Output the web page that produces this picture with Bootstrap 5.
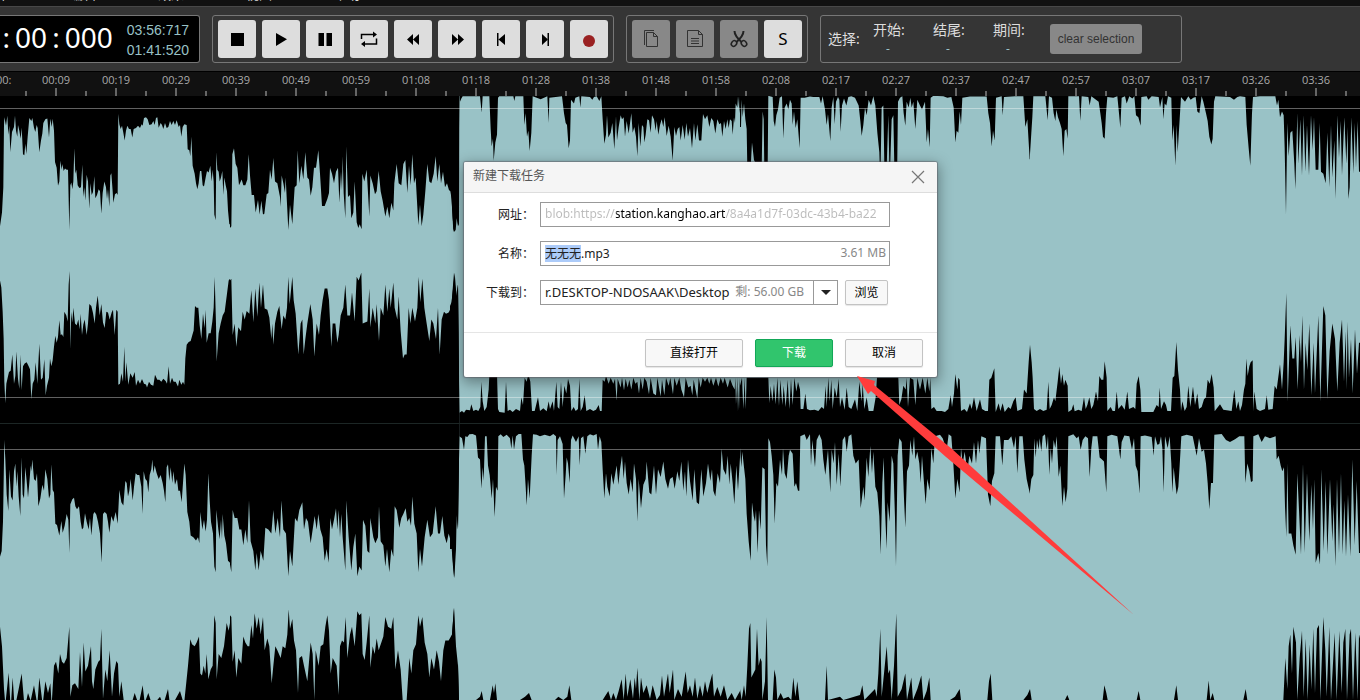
<!DOCTYPE html>
<html lang="zh-CN">
<head>
<meta charset="utf-8">
<meta name="viewport" content="width=device-width, initial-scale=1">
<title>音频编辑器</title>
<link href="https://cdn.jsdelivr.net/npm/bootstrap@5.3.0/dist/css/bootstrap.min.css" rel="stylesheet">
<style>
  body { background: #000; font-family: "Noto Sans", "Noto Sans CJK SC", sans-serif; font-size: 14px; line-height: 20px; color: #ddd; }
  .menu-strip { height: 6px; background: #111; font-size: 13px; }
  .menu-strip a { flex: 0 0 88px; margin-top: -15px; color: #ddd; line-height: 18px; }
  .menu-strip a:first-child { margin-left: -18px; }
  .toolbar { height: 65px; background: #353535; border-top: 1px solid #484848; padding-top: 8px; gap: 12px; }
  .panel-box { height: 48px; border: 1px solid #777; border-radius: 3px; padding: 0 5px; gap: 6px; }
  .clock-box { width: 200px; background: #000; border-left: 0; border-radius: 0 3px 3px 0; padding: 0 10px; gap: 14px; }
  .clock-now { font-size: 28px; line-height: 42px; color: #fff; gap: 5px; padding-bottom: 4px; }
  .clock-side { font: 14px/20px "Liberation Sans", Arial, sans-serif; color: #99c2c6; padding-top: 2px; }
  .tool { width: 38px; height: 38px; background: #ddd; border: 0; border-radius: 3px; color: #000; font-size: 17px; }
  .tool:disabled { background: #888; color: #333; }
  .tool svg, .btn-x svg { display: block; }
  .select-box { width: 362px; padding: 0 7px; gap: 0; }
  .sel-title { width: 45px; }
  .sel-cell { width: 60px; line-height: 19px; }
  .sel-cell output { width: 30px; color: #99c2c6; font-size: 12px; }
  .clear-btn { width: 92px; height: 30px; background: #888; border: 0; border-radius: 3px; color: #333; font: 12px/30px "Liberation Sans", Arial, sans-serif; margin-left: -3px; }
  .ruler { height: 25px; border-top: 1px solid #000; background:
      linear-gradient(90deg, #666 2px, transparent 2px) 55px 100% / 60px 8px repeat-x,
      linear-gradient(90deg, #666 2px, transparent 2px) 25px 100% / 60px 5px repeat-x, #111; }
  .ruler-labels { margin-left: -34px; font: 11px/16px "Open Sans", sans-serif; color: #aaa; }
  .ruler-labels span { flex: 0 0 60px; text-align: center; }
  .wave { height: 604px; background: #99c2c6; }
  .pointer { left: 850px; top: 370px; z-index: 20; pointer-events: none; }
  .dl { left: 464px; top: 162px; width: 473px; z-index: 10; background: #fff; color: #222; font-size: 12px; border-radius: 2px; box-shadow: 0 0 1px 1px rgba(90,80,90,.5), 0 4px 14px 2px rgba(0,0,0,.35); }
  .dl-head { height: 31px; background: #f5f5f5; border-bottom: 1px solid #ddd; padding: 0 12px 2px 9px; color: #555; border-radius: 2px 2px 0 0; }
  .btn-x { background: none; border: 0; color: #777; padding: 2px 0 0; }
  .dl-body { padding: 9px 47px 13px 0; }
  .dl-row { gap: 6px; margin-bottom: 14px; }
  .dl-row label { width: 70px; text-align: right; }
  .dest { gap: 7px; padding-right: 2px; }
  .field { height: 25px; border: 1px solid #999; background: #fff; }
  .field input { border: 0; outline: 0; background: none; padding: 0 0 2px 4px; color: #222; min-width: 0; height: 23px; }
  .field .url { margin-right: 4px; padding-right: 0; color: transparent; background: linear-gradient(90deg, #bbb 75px, #000 75px 184px, #bbb 184px); -webkit-background-clip: text; background-clip: text; }
  .field .fname { background: linear-gradient(#accbf9, #accbf9) 4px 3px / 36px 17px no-repeat; }
  .field .folder { font-size: 13px; }
  .field .note { color: #888; padding: 0 3px 2px 0; white-space: nowrap; }
  .field .free { padding: 0 9px 2px 4px; }
  .field .drop { width: 24px; height: 23px; border: 0; border-left: 1px solid #999; background: #fff; flex-shrink: 0; }
  .drop-mark { width: 0; border: 5px solid transparent; border-top-color: #222; border-bottom: 0; display: block; margin: auto; }
  .dl-btn { width: 78px; height: 28px; border: 1px solid #c3c3c3; border-radius: 2px; background: #f8f8f8; color: #000; padding: 0; box-shadow: 0 1px 1px rgba(0,0,0,.1); }
  .dl-btn.wide { width: 98px; }
  .dl-btn.browse { width: 43px; height: 25px; flex-shrink: 0; }
  .dl-btn.go { background: #31c56d; border-color: #12a757; color: #fff; }
  .dl-foot { height: 45px; border-top: 1px solid #e5e5e5; padding: 6px 14px; gap: 12px; }
</style>
</head>
<body class="vh-100 overflow-hidden position-relative">

<nav class="menu-strip d-flex overflow-hidden" aria-label="菜单">
  <a class="text-decoration-none" href="#">文件</a><a class="text-decoration-none" href="#">编辑</a><a class="text-decoration-none" href="#">效果</a><a class="text-decoration-none" href="#">视图</a><a class="text-decoration-none" href="#">帮助</a>
</nav>

<header class="toolbar d-flex align-items-start">
  <div class="panel-box clock-box d-flex align-items-center justify-content-end flex-shrink-0">
    <div class="clock-now d-flex"><span>0</span><span>:</span><span>00</span><span>:</span><span>000</span></div>
    <div class="clock-side"><div>03:56:717</div><div>01:41:520</div></div>
  </div>

  <div class="panel-box d-flex align-items-center flex-shrink-0">
    <button class="tool p-0 d-grid align-items-center justify-content-center" aria-label="停止"><svg width="20" height="20"><path d="M4 4h13v13H4z"/></svg></button>
    <button class="tool p-0 d-grid align-items-center justify-content-center" aria-label="播放"><svg width="20" height="20"><path d="M5 4 16 10.300 5 17z"/></svg></button>
    <button class="tool p-0 d-grid align-items-center justify-content-center" aria-label="暂停"><svg width="20" height="20"><path d="M3.500 4H9v13H3.500zM11.500 4H17v13h-5.500z"/></svg></button>
    <button class="tool p-0 d-grid align-items-center justify-content-center" aria-label="循环"><svg width="20" height="20"><path d="M2.500 10V5.500H15M17.500 9.500V15H5" fill="none" stroke="#000" stroke-width="1.500"/><path d="M14 2.500 18 5.500 14 8.500zM6 12 2 15 6 18z"/></svg></button>
    <button class="tool p-0 d-grid align-items-center justify-content-center" aria-label="快退"><svg width="20" height="20"><path d="M10 5v11L4 10.500zM16 5v11l-6-5.500z"/></svg></button>
    <button class="tool p-0 d-grid align-items-center justify-content-center" aria-label="快进"><svg width="20" height="20"><path d="M5 5v11l6-5.500zM11 5v11l6-5.500z"/></svg></button>
    <button class="tool p-0 d-grid align-items-center justify-content-center" aria-label="跳到开头"><svg width="20" height="20"><path d="M6 4h1.500v13H6zM14 5v11l-6.500-5.500z"/></svg></button>
    <button class="tool p-0 d-grid align-items-center justify-content-center" aria-label="跳到结尾"><svg width="20" height="20"><path d="M12.500 4H14v13h-1.500zM7 5v11l6-5.500z"/></svg></button>
    <button class="tool p-0 d-grid align-items-center justify-content-center" aria-label="录音"><svg width="20" height="20"><circle cx="10" cy="12" r="6" fill="#9a2122"/></svg></button>
  </div>

  <div class="panel-box d-flex align-items-center flex-shrink-0">
    <button class="tool p-0 d-grid align-items-center justify-content-center" disabled aria-label="复制"><svg width="20" height="20" fill="none" stroke="#333"><path d="M5.500 3.500h7l4 4v10h-11zM12.500 3.500v4h4M3.500 16V1.500H13"/></svg></button>
    <button class="tool p-0 d-grid align-items-center justify-content-center" disabled aria-label="粘贴"><svg width="20" height="20" fill="none" stroke="#333"><path d="M2.500 1.500h11l4 4v12h-15zM13.500 1.500v4h4M6 9.500h8M6 12h8M6 14.500h8"/></svg></button>
    <button class="tool p-0 d-grid align-items-center justify-content-center" disabled aria-label="剪切"><svg width="20" height="20" fill="none" stroke="#222" stroke-width="1.500"><path d="M5.500 2c0 3 2 6.500 7 11M14.500 2c0 3-2 6.500-7 11" stroke-width="2"/><ellipse cx="5" cy="14.500" rx="2.500" ry="3" transform="rotate(40 5 14.500)"/><ellipse cx="15" cy="14.500" rx="2.500" ry="3" transform="rotate(-40 15 14.500)"/></svg></button>
    <button class="tool p-0" aria-label="静音">S</button>
  </div>

  <div class="panel-box select-box d-flex align-items-center flex-shrink-0">
    <div class="sel-title">选择:</div>
    <div class="sel-cell">开始:<output class="d-block text-center">-</output></div>
    <div class="sel-cell">结尾:<output class="d-block text-center">-</output></div>
    <div class="sel-cell">期间:<output class="d-block text-center">-</output></div>
    <button class="clear-btn p-0" disabled>clear selection</button>
  </div>
</header>

<div class="ruler overflow-hidden">
  <div class="ruler-labels d-flex">
    <span>00:00:</span><span>00:09</span><span>00:19</span><span>00:29</span><span>00:39</span><span>00:49</span><span>00:59</span><span>01:08</span><span>01:18</span><span>01:28</span><span>01:38</span><span>01:48</span><span>01:58</span><span>02:08</span><span>02:17</span><span>02:27</span><span>02:37</span><span>02:47</span><span>02:57</span><span>03:07</span><span>03:17</span><span>03:26</span><span>03:36</span>
  </div>
</div>

<main class="wave">
<svg class="d-block w-100 h-100" viewBox="0 0 1360 604" preserveAspectRatio="none" role="img" aria-label="双声道波形">
  <!-- silence above and below each channel, section by section; per section: left top, left bottom, right top, right bottom -->
  <g transform="translate(0 -6) scale(.33333 .389)">
    <path d="M0 0 0 350 6 315 10 250 12 90 13 70 18 92 22 66 25 115 28 92 31 160 36 108 42 95 45 66 48 105 52 120 54 90 58 105 62 125 65 97 69 165 73 168 76 138 79 165 83 120 88 72 94 80 97 72 102 97 106 108 110 90 113 98 118 160 123 130 127 112 130 85 136 75 142 73 147 122 151 74 155 95 158 74 162 105 165 185 170 200 174 246 178 235 181 182 185 205 187 190 191 208 195 202 200 205 204 205 208 360 211 245 214 238 217 255 220 235 223 150 226 215 229 205 233 245 238 252 243 250 247 192 250 275 253 250 256 285 260 218 264 235 268 305 271 240 275 270 279 262 283 222 286 278 291 270 296 255 300 260 304 318 308 265 313 235 318 250 321 280 324 255 328 300 331 220 334 214 338 260 340 290 345 268 350 265 353 270 355 62 358 88 362 100 366 92 370 110 374 130 378 105 382 92 387 100 392 100 397 122 401 100 408 98 414 92 420 98 425 88 428 92 432 72 438 70 443 75 448 90 455 88 460 80 464 90 468 72 472 70 476 97 482 85 486 90 490 100 495 85 500 98 505 95 510 80 515 90 520 80 525 90 530 78 536 95 540 90 544 120 548 95 553 88 560 90 563 152 568 155 571 170 574 120 578 195 584 215 588 240 592 255 596 240 600 208 604 208 608 245 612 248 617 225 621 208 626 212 631 195 635 235 638 205 641 235 643 320 647 335 649 160 652 205 656 210 659 235 663 225 667 208 670 270 673 225 677 245 681 260 684 310 688 345 690 345 690 0Z"/>
    <path d="M0 857 0 490 4 508 8 570 11 640 13 750 16 805 19 755 23 740 27 725 32 722 37 680 42 755 46 735 49 672 54 742 58 768 61 680 65 772 69 710 74 703 80 700 86 710 90 718 94 795 98 755 103 745 107 700 112 755 118 652 123 745 128 740 133 692 137 785 141 760 147 740 150 690 154 710 158 695 162 660 166 632 170 650 174 635 178 592 182 630 186 628 190 635 193 570 199 580 203 595 206 500 209 465 211 665 214 570 217 598 220 560 225 600 230 605 235 590 239 615 242 575 246 630 250 603 254 590 260 630 264 600 268 550 274 555 279 573 284 600 288 560 293 528 299 580 304 550 309 598 314 612 319 570 324 572 329 590 335 572 339 565 344 630 349 565 353 570 355 758 360 755 364 728 369 750 373 660 376 750 379 700 385 758 391 728 398 740 404 725 408 760 414 745 420 755 426 743 432 755 438 757 441 765 447 750 453 758 460 760 465 732 472 745 478 745 484 750 490 742 497 748 501 755 506 710 510 755 516 740 521 750 527 750 534 762 538 745 544 758 549 750 553 758 556 690 560 655 566 648 572 645 577 630 581 618 585 555 590 560 595 560 599 605 604 640 609 575 614 612 617 565 620 650 626 625 632 625 637 595 641 560 644 480 648 600 650 697 656 625 662 600 668 580 674 570 680 530 686 490 690 485 690 857Z"/>
    <path d="M0 857 0 1200 5 1185 9 1110 13 900 16 950 20 1040 25 1082 28 975 33 1045 38 1055 42 980 46 960 49 1020 52 980 56 1045 61 1095 64 945 68 1040 72 1050 76 970 81 1015 84 1048 89 1000 92 965 94 980 97 950 102 1000 107 1005 111 985 115 1070 121 1050 127 1015 132 1030 136 975 142 1000 147 1050 151 1040 154 962 158 1028 162 1035 166 1115 171 1118 178 1145 184 1108 188 1138 194 1120 200 1090 205 1105 208 1190 211 1065 217 1052 222 1048 226 1070 231 1078 237 1070 242 1110 246 1130 250 1125 255 1088 260 1110 266 1130 270 1100 274 1145 280 1090 284 1085 289 1092 294 1110 300 1140 305 1215 309 1090 314 1085 320 1090 324 1110 328 1138 334 1095 340 1110 347 1085 353 1115 358 1028 364 1060 370 1068 376 1005 380 1010 384 1045 388 1030 392 1000 398 1055 402 1020 407 985 412 990 418 990 424 1020 428 1090 431 980 436 1000 441 1005 445 1035 449 990 454 975 457 950 460 985 464 965 470 985 476 1000 482 990 488 1010 492 1030 496 1060 500 970 504 962 508 1005 512 970 517 1010 520 980 525 1015 531 1000 535 1030 540 1030 545 1060 549 1010 553 960 557 990 562 1085 568 1110 572 1145 580 1150 588 1158 594 1150 598 1165 601 1085 607 1130 612 1105 617 1135 621 1105 625 985 629 1055 633 1110 639 1140 643 1225 647 1240 649 1080 655 1130 659 1155 663 1105 666 1155 668 1090 673 1145 678 1165 684 1210 690 1215 690 857Z"/>
    <path d="M0 1600 0 1380 6 1430 12 1540 16 1580 26 1498 32 1590 38 1510 44 1590 56 1540 65 1500 74 1590 84 1550 92 1570 102 1530 112 1580 118 1510 128 1580 136 1520 144 1550 151 1525 155 1580 162 1480 168 1470 175 1500 180 1450 186 1470 192 1475 200 1460 208 1380 211 1560 217 1530 225 1525 235 1540 240 1445 246 1535 251 1420 256 1495 264 1480 273 1430 276 1520 280 1540 286 1490 295 1470 300 1465 304 1385 309 1565 316 1490 322 1520 329 1440 336 1560 342 1500 349 1468 354 1475 358 1560 364 1520 372 1575 382 1570 394 1580 404 1550 416 1580 428 1530 434 1575 445 1550 456 1580 470 1570 480 1560 490 1580 504 1540 510 1580 524 1570 540 1545 552 1580 558 1530 564 1480 571 1412 576 1425 584 1430 590 1420 597 1405 601 1500 606 1505 611 1480 616 1500 620 1450 625 1515 632 1490 638 1480 643 1350 647 1370 650 1515 656 1450 664 1460 672 1430 680 1370 686 1390 690 1370 690 1600Z"/>
  </g>
  <g transform="translate(230 -6) scale(.33333 .389)">
    <path d="M0 0 0 355 4 350 7 165 12 150 17 190 22 200 27 245 35 230 40 245 46 245 52 230 56 165 60 220 65 270 72 270 77 315 84 283 89 320 94 285 99 320 103 318 110 268 115 265 120 205 125 230 130 175 135 235 142 240 150 275 152 300 155 220 160 240 165 265 167 225 175 360 180 295 187 345 194 250 200 245 203 155 208 240 214 195 220 230 226 160 232 225 237 230 242 272 247 250 252 200 258 200 265 155 270 215 276 298 284 298 292 280 297 265 300 200 306 215 312 240 318 210 324 200 328 290 333 210 336 258 338 170 341 265 346 330 349 145 354 275 360 270 364 330 370 315 374 235 380 340 385 355 389 345 395 358 397 215 403 235 410 205 418 325 421 220 428 240 435 268 440 260 446 208 452 260 458 285 466 325 472 300 478 330 484 290 490 310 493 240 500 190 506 240 514 245 520 190 526 180 532 265 537 195 542 245 547 165 552 240 557 225 565 348 570 295 575 350 580 320 586 260 592 190 598 235 604 240 611 215 617 170 622 235 628 190 633 240 639 210 645 250 651 240 657 258 663 260 668 330 672 365 677 360 680 330 684 350 687 345 688 0Z"/>
    <path d="M0 857 0 490 4 485 8 630 14 600 19 660 25 610 33 620 38 570 44 590 50 568 58 575 64 515 70 597 76 510 82 583 88 495 93 560 99 500 104 562 112 565 118 585 124 640 127 600 130 655 135 600 142 570 148 555 155 615 160 580 166 590 171 560 175 480 179 550 187 480 191 540 197 575 205 680 212 600 217 590 221 680 226 640 232 600 241 550 248 590 253 685 260 600 267 630 272 580 278 540 284 510 292 510 297 540 304 660 308 600 316 600 322 650 326 630 332 580 340 560 346 500 352 580 360 580 366 520 374 595 380 480 386 490 394 470 398 600 405 598 412 595 418 510 421 610 428 560 436 600 440 550 447 645 452 560 460 580 466 500 472 570 478 510 482 560 490 495 494 560 502 590 506 530 512 620 519 690 524 680 530 680 536 560 541 600 547 560 555 595 562 560 566 480 571 545 577 485 583 560 590 600 598 645 604 590 610 600 618 640 624 560 629 680 635 590 642 570 648 575 656 572 663 560 668 520 674 470 680 535 684 500 686 620 688 830 688 857Z"/>
    <path d="M0 857 0 1220 4 1240 8 1080 14 1100 22 1100 28 1130 34 1130 40 1170 46 1130 52 1165 57 1055 62 1160 70 1185 76 1235 80 1190 86 1235 92 1185 100 1210 106 1125 115 1130 124 1140 130 1080 136 1140 143 1100 150 1150 154 1055 160 1130 168 1140 175 1250 180 1185 187 1225 195 1100 202 1110 208 1080 217 1060 222 1130 228 1100 234 1110 242 1165 248 1130 254 1095 260 1130 265 1090 271 1130 278 1150 284 1210 290 1180 296 1215 301 1100 306 1130 312 1105 318 1075 322 1130 326 1080 330 1150 334 1090 338 1150 346 1235 349 1055 356 1150 364 1235 370 1175 376 1140 382 1250 388 1225 395 1235 399 1105 406 1120 412 1185 418 1190 421 1100 430 1150 436 1165 444 1150 447 1070 452 1160 460 1170 466 1225 471 1180 478 1240 484 1180 490 1200 494 1070 500 1080 508 1125 514 1100 520 1090 527 1075 532 1110 538 1100 543 1120 547 1045 553 1115 560 1140 565 1240 570 1180 576 1225 584 1150 592 1105 600 1150 608 1140 617 1070 624 1140 630 1140 637 1095 643 1145 650 1165 656 1140 664 1165 669 1225 673 1255 678 1180 680 1090 684 1130 688 890 688 857Z"/>
    <path d="M0 1600 0 1350 4 1355 8 1470 14 1440 19 1510 25 1460 34 1475 40 1405 46 1420 53 1430 58 1430 64 1375 69 1410 74 1345 80 1385 86 1355 92 1400 99 1355 104 1440 112 1410 118 1430 125 1525 130 1480 136 1430 142 1440 152 1460 158 1430 166 1435 172 1400 176 1335 180 1385 187 1360 192 1415 198 1440 204 1550 208 1460 216 1455 222 1480 232 1520 242 1420 248 1450 253 1568 257 1440 266 1480 272 1430 280 1425 286 1380 292 1350 297 1390 302 1500 308 1460 314 1470 320 1480 326 1555 330 1430 336 1415 342 1420 347 1355 352 1460 360 1400 366 1380 374 1430 382 1340 388 1350 394 1345 398 1450 404 1465 410 1420 418 1350 421 1485 428 1430 434 1450 440 1410 446 1440 454 1420 460 1405 466 1355 474 1380 484 1385 490 1355 496 1490 504 1440 512 1490 518 1568 530 1568 538 1460 544 1500 550 1440 558 1425 565 1350 570 1380 577 1355 584 1420 592 1450 598 1510 604 1460 612 1490 620 1440 627 1470 633 1520 640 1440 646 1415 656 1415 666 1400 672 1330 678 1430 684 1480 688 1600Z"/>
  </g>
  <g transform="translate(450 -6) scale(.33333 .389)">
    <path d="M28 0 30 30 34 22 38 16 90 16 95 58 98 16 118 16 122 100 125 145 129 125 131 182 136 135 141 115 144 20 148 16 190 16 193 28 196 16 220 16 223 90 227 60 231 120 235 105 239 157 244 110 248 16 272 24 292 16 296 85 298 20 336 16 342 60 347 85 351 90 356 150 360 130 363 25 372 35 376 20 388 16 391 45 394 16 420 18 427 25 432 18 440 16 448 28 454 16 458 75 463 138 468 115 471 65 475 122 482 110 487 85 493 152 498 68 501 130 506 95 512 65 516 75 521 70 525 120 530 80 536 112 544 60 548 110 553 95 558 120 562 170 566 85 571 145 576 90 580 95 583 135 587 115 592 75 597 78 602 110 606 65 612 75 617 105 620 80 625 115 630 90 635 75 640 95 644 70 650 118 656 92 662 120 668 182 673 95 678 118 683 100 688 95 692 130 698 90 704 128 709 85 714 120 720 98 726 150 732 85 736 130 742 88 747 130 754 130 759 62 765 75 772 65 778 95 784 72 790 80 796 112 802 75 808 88 813 85 817 120 822 80 827 100 832 75 836 98 840 75 845 80 848 115 852 70 855 85 857 35 862 45 864 16 869 60 870 16 870 0Z"/>
    <path d="M28 857 28 830 36 825 42 830 48 822 60 823 64 808 70 825 78 822 85 825 91 815 94 750 98 800 103 825 110 815 116 770 120 700 140 700 144 820 148 828 164 830 168 750 173 825 180 822 188 828 198 820 210 825 214 790 219 810 224 740 230 750 235 730 241 750 246 825 254 825 264 790 270 825 280 818 290 826 296 800 300 820 308 800 312 825 319 750 323 815 328 820 333 750 338 815 343 760 349 780 354 742 360 760 364 825 371 815 377 825 384 820 388 742 392 825 398 815 404 785 409 825 420 820 430 825 438 822 446 810 450 825 455 825 458 745 464 750 468 735 476 755 482 740 490 755 495 742 500 798 503 742 512 765 516 740 522 772 527 742 533 765 538 745 544 770 550 740 556 755 562 750 567 780 572 740 578 770 583 740 590 750 597 782 602 740 610 780 618 785 622 740 632 788 636 745 643 785 648 740 656 760 661 740 669 782 673 740 680 760 688 740 694 770 702 790 707 740 715 765 722 760 727 785 731 745 742 793 746 740 752 765 758 740 765 750 772 740 778 755 783 740 790 760 798 740 805 762 812 740 819 755 824 740 833 765 840 742 848 760 854 770 856 740 858 808 862 740 864 825 868 740 870 820 870 857Z"/>
    <path d="M28 857 28 890 36 895 42 925 46 890 52 892 58 885 68 884 78 888 84 945 90 950 94 1025 98 970 101 1005 105 890 110 890 114 965 119 990 125 1050 129 1000 134 1098 138 1020 143 1030 145 890 152 885 160 892 170 886 180 895 184 922 188 888 192 925 198 890 206 884 214 884 219 950 223 965 227 1020 230 1068 234 1000 239 1050 245 940 249 885 260 886 270 890 284 886 300 890 310 884 318 890 320 990 323 900 330 890 338 910 342 1050 347 990 350 945 354 960 359 1010 363 900 368 888 378 905 386 890 389 965 393 895 400 890 406 935 412 890 420 885 430 888 440 884 444 925 449 890 454 905 458 975 463 1050 468 985 472 1020 479 1045 484 985 490 1015 496 985 500 965 505 1015 510 975 516 940 521 1000 525 955 530 1010 536 1040 542 1000 548 1035 552 960 558 1000 562 1110 566 1000 573 1075 580 1015 587 1000 590 955 598 1035 604 1040 612 965 618 1040 624 975 632 995 640 955 646 1000 654 1025 660 1000 668 995 674 1025 682 980 688 1005 694 955 700 1030 705 980 709 1045 714 950 720 1005 728 1055 733 975 740 1060 747 1065 754 975 760 1045 768 1010 774 960 781 1005 786 975 790 1030 796 1045 803 985 810 1010 815 922 820 975 828 990 833 940 838 1015 842 960 848 1010 853 1065 859 965 864 1030 870 945 870 857Z"/>
    <path d="M0 857V1180L6 1180 12 1254 18 1130 20 1090 24 1130 28 890 28 857Z"/>
    <path d="M0 1600 0 1420 5 1410 12 1332 16 1450 20 1500 24 1475 28 1600 78 1568 90 1560 95 1545 100 1568 120 1568 128 1530 132 1550 136 1525 141 1568 210 1568 225 1560 237 1550 245 1568 315 1568 325 1560 340 1568 352 1560 358 1530 364 1568 458 1568 475 1545 483 1568 490 1550 498 1568 506 1545 515 1515 521 1568 527 1500 532 1560 541 1515 549 1565 554 1510 558 1540 562 1485 568 1568 573 1510 580 1550 590 1530 600 1565 608 1530 620 1568 630 1555 636 1505 642 1560 654 1500 659 1550 669 1490 673 1568 684 1540 695 1560 707 1495 713 1550 720 1530 728 1560 735 1510 742 1565 750 1530 758 1560 765 1520 772 1550 779 1525 787 1500 792 1560 802 1535 812 1560 822 1530 832 1568 845 1550 855 1568 870 1545 870 1600Z"/>
    <path d="M0 0V255L5 280 10 365 15 345 18 305 24 345 28 15 28 0ZM0 857V555L5 545 12 470 18 530 24 500 28 830 28 857Z"/>
  </g>
  <g transform="translate(740 -6) scale(.33333 .389)">
    <path d="M0 0 0 95 3 95 5 25 8 70 12 35 16 75 20 100 22 200 32 200 36 135 42 180 54 200 65 200 68 55 71 75 73 200 83 200 85 15 98 18 101 80 105 95 109 65 114 50 119 20 126 16 130 125 134 45 140 35 145 50 150 25 155 35 158 90 162 55 167 98 172 75 179 150 182 20 194 20 210 17 220 18 238 18 243 35 248 16 255 50 260 90 264 62 271 132 275 45 280 18 284 88 288 30 294 18 298 25 302 108 306 40 312 22 319 40 325 18 334 16 345 20 356 40 361 80 365 118 370 90 375 45 380 65 386 25 393 40 400 16 406 40 412 110 418 160 421 240 425 45 430 40 434 240 440 200 445 65 449 240 455 75 460 65 464 240 471 240 474 30 480 20 487 16 491 60 496 92 500 30 506 45 511 20 515 45 520 30 526 100 532 25 540 40 546 50 555 30 560 135 564 100 569 147 572 20 580 15 610 16 622 20 634 18 641 45 646 135 650 105 655 110 659 55 663 90 667 20 690 17 740 17 745 60 750 85 755 145 759 105 764 130 768 20 785 16 788 65 792 18 825 16 850 16 856 95 862 75 869 178 870 178 870 0Z"/>
    <path d="M0 857 0 760 6 740 10 820 14 740 17 820 20 740 85 740 88 805 92 760 97 800 102 755 107 808 112 740 117 812 121 745 127 810 131 760 137 815 143 745 148 820 153 742 158 810 163 740 169 775 174 750 180 770 182 820 190 820 196 780 201 820 210 823 224 822 235 825 245 815 252 820 257 760 260 815 265 740 269 800 274 745 278 820 284 765 290 790 296 742 300 815 306 790 314 822 320 765 326 815 334 820 345 795 352 825 358 750 365 800 368 755 373 820 380 790 386 825 400 825 407 790 411 740 475 740 478 810 484 795 490 760 497 770 500 740 504 815 510 740 520 745 526 810 532 740 540 770 548 740 556 780 562 740 568 775 571 740 574 820 582 815 590 825 605 825 615 828 625 820 632 785 636 815 642 780 646 730 652 770 655 740 659 745 663 825 673 820 681 828 690 805 695 820 702 790 710 825 720 795 726 820 736 825 744 825 748 745 754 740 763 715 767 828 776 805 781 825 788 805 794 828 805 815 812 820 820 800 827 790 832 825 846 820 852 770 860 780 866 700 870 655 870 857Z"/>
    <path d="M0 857 0 920 4 970 7 930 12 970 16 1000 20 1090 26 1160 32 1210 36 1060 41 1095 45 1110 48 1080 53 1190 57 1080 62 1130 67 970 74 975 78 1170 82 1225 85 895 90 905 95 940 100 990 104 1115 109 1010 114 1020 120 950 126 990 129 920 134 985 140 1000 146 940 150 925 158 935 163 1020 168 1010 174 1030 178 1030 181 890 194 885 200 900 210 885 213 965 217 900 225 970 230 900 238 885 245 900 250 950 256 990 264 925 271 1035 275 925 281 960 285 905 290 1015 296 935 301 1020 308 900 315 890 320 930 326 890 334 885 340 940 347 960 356 950 362 1075 370 1020 374 1055 380 945 385 995 391 915 396 985 400 930 406 1020 412 1035 418 1095 422 1195 427 1010 431 945 435 1080 440 1180 443 1060 449 1110 455 940 460 960 465 1100 468 1225 473 940 478 895 485 905 488 960 492 1050 496 1125 501 980 507 965 511 900 517 940 522 890 526 950 532 930 538 960 542 1010 546 940 552 1010 557 1065 562 1000 569 1030 574 920 580 960 585 890 600 886 608 895 620 925 626 885 634 890 640 960 646 1050 652 1000 659 1035 663 920 668 960 674 930 682 980 688 940 696 960 702 905 708 960 714 900 718 935 724 890 738 895 744 1040 751 1070 756 1005 763 985 767 890 780 890 787 965 792 900 805 900 814 890 822 920 827 890 832 985 838 890 848 890 853 950 860 1000 865 1020 870 1038 870 857Z"/>
    <path d="M0 1600 0 1540 5 1568 12 1530 17 1560 22 1480 27 1385 31 1370 34 1510 40 1500 46 1490 51 1385 56 1480 61 1460 65 1470 67 1568 75 1520 80 1355 84 1568 98 1568 103 1490 108 1510 112 1568 122 1550 130 1565 145 1560 154 1568 160 1510 166 1560 172 1520 178 1568 255 1568 260 1480 264 1568 300 1560 310 1568 360 1555 367 1530 373 1568 405 1540 410 1560 415 1500 421 1385 425 1560 432 1500 440 1430 445 1500 450 1490 455 1568 462 1480 469 1345 473 1560 485 1540 496 1500 501 1568 514 1510 519 1568 532 1540 544 1505 550 1568 560 1545 568 1510 572 1568 630 1568 645 1560 659 1540 663 1568 742 1568 747 1520 752 1500 757 1568 850 1568 862 1555 870 1540 870 1600Z"/>
  </g>
  <g transform="translate(1030 -6) scale(.33333 .389)">
    <path d="M0 0 0 165 4 110 7 70 10 16 46 16 53 78 57 16 66 20 71 60 76 80 79 50 84 70 90 85 95 100 100 170 104 105 109 100 113 125 115 16 147 16 151 80 155 16 175 18 179 40 184 16 206 30 211 60 215 85 219 120 224 125 228 60 232 18 250 20 262 16 267 60 271 98 275 20 285 16 290 35 298 16 307 22 313 16 318 65 325 70 332 92 334 18 350 16 355 25 365 16 386 18 390 45 397 18 400 75 404 35 409 40 414 16 424 20 427 130 431 90 436 195 440 90 443 160 449 75 453 18 465 30 475 16 482 25 490 20 497 18 502 55 508 60 515 16 520 30 528 60 533 80 538 120 544 140 548 125 552 30 556 16 600 18 612 25 622 18 630 16 646 18 650 90 656 150 661 195 666 60 669 18 690 16 736 16 741 40 745 25 750 70 756 55 761 65 764 150 768 320 772 85 776 170 781 110 787 105 793 190 796 255 802 60 805 190 811 75 816 220 821 65 826 210 831 90 837 220 843 65 848 155 852 70 857 205 865 205 869 85 873 210 880 215 887 240 892 110 898 250 903 90 907 225 913 130 917 280 922 65 927 175 932 80 936 220 943 70 949 190 953 95 955 280 959 250 964 70 970 215 974 85 978 200 983 80 987 210 990 210 990 0Z"/>
    <path d="M0 857 0 655 5 700 8 740 12 820 20 825 30 820 40 825 50 822 55 750 59 820 65 810 72 790 76 800 83 750 88 710 93 755 97 730 102 760 106 745 113 760 115 828 125 822 130 808 134 826 145 822 155 825 162 790 167 820 172 810 178 790 184 820 190 810 198 775 204 800 208 735 214 745 220 745 224 697 230 740 232 825 242 815 248 825 255 825 260 775 265 820 275 810 284 822 292 775 297 820 310 815 316 820 320 755 326 735 331 770 334 828 345 828 370 828 380 810 386 815 389 765 393 820 402 800 408 810 412 825 423 825 428 740 433 735 439 648 444 720 450 770 453 825 457 800 464 825 470 815 475 760 481 815 489 762 495 810 502 780 507 820 515 815 522 795 528 790 533 745 539 755 545 730 551 765 554 826 570 808 580 822 605 825 613 770 619 820 625 800 630 825 636 810 642 770 646 755 649 690 653 735 658 710 662 700 668 695 670 825 673 775 680 820 690 825 705 820 710 785 715 822 728 820 734 760 740 770 750 705 756 770 761 700 764 640 769 522 773 800 781 605 787 690 793 690 797 635 803 770 809 630 813 700 817 580 822 770 827 650 832 720 838 600 844 785 851 650 855 780 865 580 871 800 880 555 886 580 892 795 899 670 907 600 915 640 922 775 929 650 936 590 942 750 947 620 950 770 953 595 957 740 963 640 968 780 975 615 981 730 987 650 990 650 990 857Z"/>
    <path d="M0 857 0 1030 4 1000 10 990 13 895 17 945 21 900 26 925 29 895 34 930 38 890 45 885 50 925 54 890 58 990 62 920 66 960 71 900 76 920 80 890 86 995 91 965 97 1070 102 1020 107 1060 112 1025 115 890 130 885 140 895 146 890 152 925 158 900 166 890 174 895 179 995 184 920 188 890 202 890 209 945 216 950 222 955 229 1035 232 890 245 886 262 890 271 950 275 905 283 888 298 890 306 925 312 895 317 965 323 980 329 1038 332 890 345 888 365 892 371 940 375 890 382 912 388 910 393 890 397 920 401 1035 405 890 413 920 419 890 424 960 427 1035 431 970 436 1010 440 1040 445 1020 449 965 454 890 470 886 488 890 494 915 500 940 507 895 515 930 522 925 528 960 533 1010 538 1078 543 1010 549 1010 553 886 575 884 588 900 600 905 615 898 628 890 643 890 646 1010 652 960 658 980 663 1008 668 1005 670 890 685 885 695 905 705 890 720 895 737 890 740 950 746 940 752 965 757 980 762 970 765 1070 769 1150 772 960 776 1140 784 1140 790 1170 797 1195 802 985 807 1080 813 1195 819 960 824 1190 831 985 838 1160 844 1015 849 1130 853 1000 857 1215 865 1190 870 1220 874 975 881 1185 887 1005 892 1195 900 1000 907 1160 911 1065 916 1225 921 1000 927 1190 933 985 938 1195 943 1055 948 1200 954 1040 961 1200 967 950 974 1170 980 1005 987 1190 990 1190 990 857Z"/>
    <path d="M0 1600 0 1540 5 1568 105 1568 112 1555 118 1568 218 1568 223 1530 229 1550 233 1568 320 1568 326 1545 331 1568 432 1568 439 1530 444 1568 530 1568 536 1518 541 1568 548 1550 553 1568 640 1568 647 1540 652 1568 760 1568 766 1460 772 1540 776 1430 781 1400 786 1500 790 1380 798 1420 802 1568 809 1460 816 1390 821 1560 827 1410 833 1568 839 1425 844 1540 850 1385 855 1550 861 1385 867 1375 871 1568 880 1355 886 1440 890 1560 898 1380 903 1568 914 1395 920 1568 928 1390 935 1550 940 1420 946 1385 951 1568 959 1400 963 1385 969 1568 976 1395 983 1568 987 1400 990 1410 990 1600Z"/>
  </g>
  <path d="M0 12.500H1360M0 301.500H1360M0 353.500H1360" stroke="#fff" stroke-opacity=".38"/>
  <path d="M0 327.500H1360" stroke="#1c2625"/>
</svg>
</main>

<section class="dl position-absolute" role="dialog" aria-labelledby="dlTitle">
  <div class="dl-head d-flex align-items-center justify-content-between">
    <span id="dlTitle">新建下载任务</span>
    <button class="btn-x" aria-label="关闭"><svg width="14" height="14"><path d="M1 1 13 13M13 1 1 13" stroke="#777" stroke-width="1.200"/></svg></button>
  </div>
  <div class="dl-body">
    <div class="dl-row d-flex align-items-center"><label for="u">网址：</label><div class="field d-flex flex-grow-1 overflow-hidden"><input id="u" class="url flex-grow-1" readonly value="blob:https://station.kanghao.art/8a4a1d7f-03dc-43b4-ba22"></div></div>
    <div class="dl-row d-flex align-items-center"><label for="n">名称：</label><div class="field d-flex align-items-center flex-grow-1"><input id="n" class="fname flex-grow-1" value="无无无.mp3"><span class="note">3.61 MB</span></div></div>
    <div class="dl-row d-flex align-items-center"><label for="p">下载到：</label><div class="dest d-flex flex-grow-1"><div class="field d-flex align-items-center flex-grow-1"><input id="p" class="folder flex-grow-1" size="8" value="r.DESKTOP-NDOSAAK\Desktop"><span class="note free">剩: 56.00 GB</span><button class="drop p-0" aria-label="选择文件夹"><span class="drop-mark"></span></button></div><button class="dl-btn browse">浏览</button></div></div>
  </div>
  <div class="dl-foot d-flex justify-content-end">
    <button class="dl-btn wide">直接打开</button>
    <button class="dl-btn go">下载</button>
    <button class="dl-btn">取消</button>
  </div>
</section>

<svg class="pointer position-absolute" width="290" height="250" aria-hidden="true"><path d="M7 6 25 11 24 15 102 79 284 245 96 87 21 21 18 24z" fill="#ff3c3c"/></svg>

<script src="https://cdn.jsdelivr.net/npm/bootstrap@5.3.0/dist/js/bootstrap.bundle.min.js"></script>
</body>
</html>
